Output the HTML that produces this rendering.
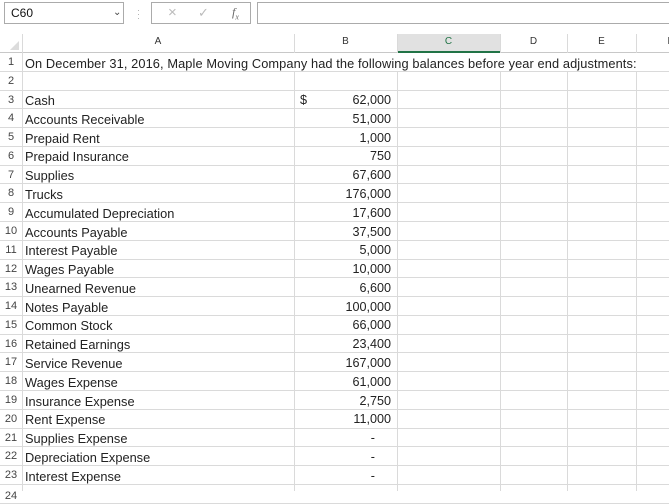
<!DOCTYPE html>
<html><head><meta charset="utf-8"><style>
*{margin:0;padding:0;box-sizing:border-box}
body{width:669px;height:491px;overflow:hidden;background:#fff;font-family:"Liberation Sans",sans-serif;color:#222;position:relative}
.abs{position:absolute}
.box{position:absolute;border:1px solid #ababab;background:#fff}
.row{position:absolute;left:0;width:669px;height:18.78px;border-bottom:1px solid #dadada}
.rn{position:absolute;left:0;width:22px;text-align:center;font-size:11px;color:#444;top:3px}
.t{position:absolute;left:25px;font-size:12.8px;top:2.5px;white-space:nowrap}
.v{position:absolute;right:278px;font-size:12.6px;top:2.5px;white-space:nowrap}
.vl{position:absolute;top:34px;bottom:0;width:1px;background:#dadada}
.hd{position:absolute;top:36px;font-size:10px;color:#333;text-align:center}
</style></head><body>
<div class="box" style="left:4px;top:2px;width:120px;height:22px"><span class="abs" style="left:6px;top:3px;font-size:12px;color:#111">C60</span><span class="abs" style="left:108px;top:4px;font-size:10px;color:#444">&#8964;</span></div>
<div class="abs" style="left:137px;top:8px;font-size:9px;color:#aaa;line-height:4px">·<br>·<br>·</div>
<div class="box" style="left:151px;top:2px;width:100px;height:22px">
<span class="abs" style="left:16px;top:1px;font-size:15px;color:#bbb">×</span>
<span class="abs" style="left:46px;top:2px;font-size:13px;color:#bbb">✓</span>
<span class="abs" style="left:80px;top:2px;font-size:12px;color:#666;font-family:'Liberation Serif',serif;font-style:italic">f<sub style="font-size:8px">x</sub></span></div>
<div class="box" style="left:257px;top:2px;width:420px;height:22px"></div>

<div class="abs" style="left:0;top:34px;width:669px;height:19px;border-bottom:1px solid #c8c8c8"></div>
<div class="abs" style="left:10px;top:41px;width:0;height:0;border-left:9px solid transparent;border-bottom:9px solid #dcdcdc"></div>
<div class="abs" style="left:397px;top:34px;width:103px;height:19px;background:#e1e1e1;border-bottom:2px solid #217346"></div>
<div class="hd" style="left:22px;width:272px">A</div>
<div class="hd" style="left:294px;width:103px">B</div>
<div class="hd" style="left:397px;width:103px;color:#217346">C</div>
<div class="hd" style="left:500px;width:67px">D</div>
<div class="hd" style="left:567px;width:69px">E</div>
<div class="hd" style="left:636px;width:69px">F</div>

<div class="vl" style="left:22px"></div>
<div class="vl" style="left:294px"></div>
<div class="vl" style="left:397px"></div>
<div class="vl" style="left:500px"></div>
<div class="vl" style="left:567px"></div>
<div class="vl" style="left:636px"></div>

<div class="abs" style="left:0;top:53px">
<div class="row" style="top:0"><div class="abs" style="left:23px;top:0;width:646px;height:18px;background:#fff"></div><span class="rn">1</span><span class="t" style="letter-spacing:0.1px">On December 31, 2016, Maple Moving Company had the following balances before year end adjustments:</span></div>
<div class="row" style="top:18.78px"><span class="rn">2</span></div>
<div class="row" style="top:37.56px"><span class="rn">3</span><span class="t">Cash</span><span class="abs" style="left:300px;top:2.5px;font-size:12.6px">$</span><span class="v">62,000</span></div>
<div class="row" style="top:56.34px"><span class="rn">4</span><span class="t">Accounts Receivable</span><span class="v">51,000</span></div>
<div class="row" style="top:75.12px"><span class="rn">5</span><span class="t">Prepaid Rent</span><span class="v">1,000</span></div>
<div class="row" style="top:93.9px"><span class="rn">6</span><span class="t">Prepaid Insurance</span><span class="v">750</span></div>
<div class="row" style="top:112.68px"><span class="rn">7</span><span class="t">Supplies</span><span class="v">67,600</span></div>
<div class="row" style="top:131.46px"><span class="rn">8</span><span class="t">Trucks</span><span class="v">176,000</span></div>
<div class="row" style="top:150.24px"><span class="rn">9</span><span class="t">Accumulated Depreciation</span><span class="v">17,600</span></div>
<div class="row" style="top:169.02px"><span class="rn">10</span><span class="t">Accounts Payable</span><span class="v">37,500</span></div>
<div class="row" style="top:187.8px"><span class="rn">11</span><span class="t">Interest Payable</span><span class="v">5,000</span></div>
<div class="row" style="top:206.58px"><span class="rn">12</span><span class="t">Wages Payable</span><span class="v">10,000</span></div>
<div class="row" style="top:225.36px"><span class="rn">13</span><span class="t">Unearned Revenue</span><span class="v">6,600</span></div>
<div class="row" style="top:244.14px"><span class="rn">14</span><span class="t">Notes Payable</span><span class="v">100,000</span></div>
<div class="row" style="top:262.92px"><span class="rn">15</span><span class="t">Common Stock</span><span class="v">66,000</span></div>
<div class="row" style="top:281.7px"><span class="rn">16</span><span class="t">Retained Earnings</span><span class="v">23,400</span></div>
<div class="row" style="top:300.48px"><span class="rn">17</span><span class="t">Service Revenue</span><span class="v">167,000</span></div>
<div class="row" style="top:319.26px"><span class="rn">18</span><span class="t">Wages Expense</span><span class="v">61,000</span></div>
<div class="row" style="top:338.04px"><span class="rn">19</span><span class="t">Insurance Expense</span><span class="v">2,750</span></div>
<div class="row" style="top:356.82px"><span class="rn">20</span><span class="t">Rent Expense</span><span class="v">11,000</span></div>
<div class="row" style="top:375.6px"><span class="rn">21</span><span class="t">Supplies Expense</span><span class="v" style="right:294px">-</span></div>
<div class="row" style="top:394.38px"><span class="rn">22</span><span class="t">Depreciation Expense</span><span class="v" style="right:294px">-</span></div>
<div class="row" style="top:413.16px"><span class="rn">23</span><span class="t">Interest Expense</span><span class="v" style="right:294px">-</span></div>
<div class="row" style="top:431.94px"><span class="rn" style="top:5px">24</span></div>
</div>
</body></html>
